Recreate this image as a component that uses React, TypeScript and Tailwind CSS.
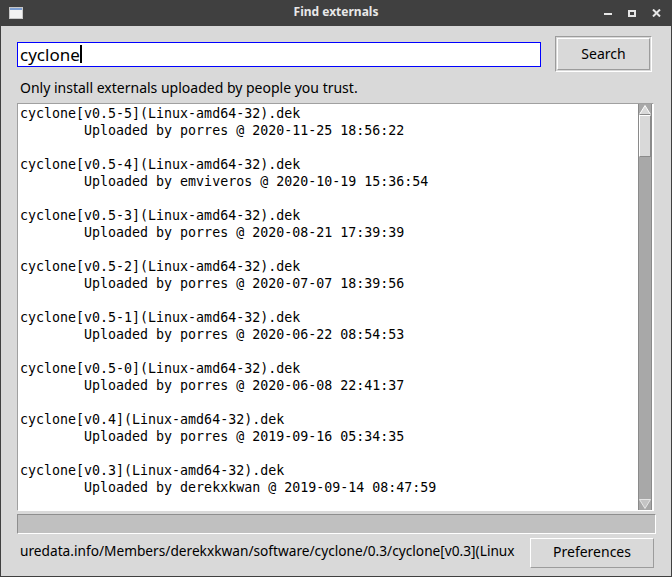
import React from "react";

const entries = [
  ["cyclone[v0.5-5](Linux-amd64-32).dek", "porres", "2020-11-25 18:56:22"],
  ["cyclone[v0.5-4](Linux-amd64-32).dek", "emviveros", "2020-10-19 15:36:54"],
  ["cyclone[v0.5-3](Linux-amd64-32).dek", "porres", "2020-08-21 17:39:39"],
  ["cyclone[v0.5-2](Linux-amd64-32).dek", "porres", "2020-07-07 18:39:56"],
  ["cyclone[v0.5-1](Linux-amd64-32).dek", "porres", "2020-06-22 08:54:53"],
  ["cyclone[v0.5-0](Linux-amd64-32).dek", "porres", "2020-06-08 22:41:37"],
  ["cyclone[v0.4](Linux-amd64-32).dek", "porres", "2019-09-16 05:34:35"],
  ["cyclone[v0.3](Linux-amd64-32).dek", "derekxkwan", "2019-09-14 08:47:59"],
];

export default function App() {
  return (
    <div className="w-[672px] h-[577px] flex flex-col bg-[#404040] overflow-hidden" style={{ fontFamily: '"Noto Sans", sans-serif' }}>
      {/* Title bar */}
      <div className="h-[26px] flex items-center relative shrink-0">
        <svg className="ml-[9px]" width="14" height="12" viewBox="0 0 14 12">
          <rect x="0.5" y="0.5" width="13" height="11" fill="#f2f2f2" stroke="#c8c8c8" />
          <rect x="1" y="1" width="12" height="2" fill="#7d9fd3" />
        </svg>
        <div className="absolute left-0 right-0 top-[-1px] h-[26px] flex items-center justify-center text-[12px] font-bold text-[#e8e8e8]">
          Find externals
        </div>
        <div className="ml-auto flex items-center">
          <div className="w-[8px] h-[2px] bg-[#e6e6e6] mt-[2px] mr-[16px]" />
          <div className="w-[8px] h-[7px] border-[#e6e6e6] border-t-[2px] border-x-[2px] border-b-[2px] mr-[16px]" />
          <svg width="9" height="8" viewBox="0 0 9 8" className="mr-[11px]">
            <path d="M1 0.5 L8 7.5 M8 0.5 L1 7.5" stroke="#e6e6e6" strokeWidth="2" />
          </svg>
        </div>
      </div>

      {/* Body */}
      <div className="flex-1 mx-[1px] mb-[1px] bg-[#d9d9d9] flex flex-col pl-[16px] pr-[15px] pt-[10px] text-[14px] text-black">
        <div className="flex items-center h-[36px]">
          <div className="flex-1 h-[25px] border border-[#0000ff] bg-white flex items-center pl-[2px] text-[17px] leading-none">
            <span>cyclone</span>
            <span className="w-[2px] h-[18px] bg-black" />
          </div>
          <div className="ml-[14px] mr-[4px] w-[97px] h-[36px] border border-t-[#9c9c9c] border-l-[#9c9c9c] border-b-white border-r-white p-[1px]">
            <div className="w-full h-full border border-t-white border-l-white border-b-[#9c9c9c] border-r-[#9c9c9c] flex items-center justify-center pb-[2px]">
              Search
            </div>
          </div>
        </div>
        <div className="h-[19px] mt-[6px] leading-[19px] pl-[3px]">Only install externals uploaded by people you trust.</div>
        <div className="mt-[6px] h-[408px] mr-[2px] border border-t-[#a0a0a0] border-l-[#a0a0a0] border-b-white border-r-white bg-white flex">
          <div className="flex-1 overflow-hidden pl-[2px] pt-[1px] text-[13.3px] leading-[17px] whitespace-pre" style={{ fontFamily: '"DejaVu Sans Mono", monospace' }}>
            {entries.map(([name, user, date], i) => (
              <div key={i}>
                <div>{name}</div>
                <div>{"        Uploaded by " + user + " @ " + date}</div>
                <div>{" "}</div>
              </div>
            ))}
          </div>
          <div className="w-[14px] mr-[1px] flex flex-col bg-[#a8a8a8] border-x border-[#8a8a8a]">
            <div className="h-[11px] bg-[#a8a8a8] flex items-center justify-center">
              <svg width="12" height="10" viewBox="0 0 12 10">
                <path d="M6 0.5 L11.5 9.5 L0.5 9.5 Z" fill="#d9d9d9" stroke="#ffffff" strokeWidth="1" />
                <path d="M11.5 9.5 L0.5 9.5" stroke="#8a8a8a" strokeWidth="1" />
              </svg>
            </div>
            <div className="h-[42px] bg-[#d9d9d9] border border-t-white border-l-white border-b-[#8a8a8a] border-r-[#8a8a8a]" />
            <div className="flex-1" />
            <div className="h-[12px] flex items-center justify-center">
              <svg width="12" height="10" viewBox="0 0 12 10">
                <path d="M0.5 0.5 L11.5 0.5 L6 9.5 Z" fill="#c4c4c4" stroke="#e6e6e6" strokeWidth="1" />
              </svg>
            </div>
          </div>
        </div>
        <div className="mt-[3px] h-[20px] bg-[#c0c0c0] border border-t-[#8e8e8e] border-l-[#8e8e8e] border-b-white border-r-white" />
        <div className="mt-[4px] h-[30px] flex items-center">
          <div className="flex-1 min-w-0 whitespace-nowrap pl-[3px] text-[13.7px] pb-[3px]">
            uredata.info/Members/derekxkwan/software/cyclone/0.3/cyclone[v0.3](Linux
          </div>
          <div className="ml-[8px] mr-[2px] w-[124px] h-[30px] border border-t-white border-l-white border-b-[#9c9c9c] border-r-[#9c9c9c] flex items-center justify-center pb-[3px]">
            Preferences
          </div>
        </div>
      </div>
    </div>
  );
}
